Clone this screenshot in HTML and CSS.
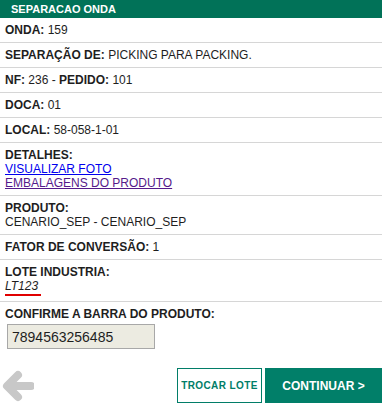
FILE: index.html
```html
<!DOCTYPE html>
<html lang="pt">
<head>
  <meta charset="UTF-8">
  <title>Separacao Onda</title>
  <link rel="stylesheet" href="styles.css">
</head>
<body>
  <div class="header">SEPARACAO ONDA</div>

  <div class="row"><b>ONDA:</b> 159</div>
  <div class="row"><b>SEPARAÇÃO DE:</b> PICKING PARA PACKING.</div>
  <div class="row"><b>NF:</b> 236 - <b>PEDIDO:</b> 101</div>
  <div class="row"><b>DOCA:</b> 01</div>
  <div class="row"><b>LOCAL:</b> 58-058-1-01</div>
  <div class="row">
    <b>DETALHES:</b><br>
    <a href="#" class="link">VISUALIZAR FOTO</a><br>
    <a href="#" class="link visited">EMBALAGENS DO PRODUTO</a>
  </div>
  <div class="row"><b>PRODUTO:</b><br>CENARIO_SEP - CENARIO_SEP</div>
  <div class="row"><b>FATOR DE CONVERSÃO:</b> 1</div>
  <div class="row">
    <b>LOTE INDUSTRIA:</b><br>
    <span class="lote">LT123</span>
  </div>
  <div class="row last">
    <b>CONFIRME A BARRA DO PRODUTO:</b>
    <input type="text" class="barra" value="7894563256485" readonly>
  </div>

  <div class="actions">
    <a href="#" class="back">
      <svg width="32" height="34" viewBox="0 0 32 34">
        <path d="M29 17 H8 M16 6 L5 17 L16 28" fill="none" stroke="#c8c8c8" stroke-width="8" stroke-linecap="round" stroke-linejoin="round"/>
      </svg>
    </a>
    <div class="buttons">
      <button class="btn-outline">TROCAR LOTE</button>
      <button class="btn-primary">CONTINUAR &gt;</button>
    </div>
  </div>
</body>
</html>
```

FILE: styles.css
```css
body {
  font-family: "Liberation Sans", Arial, sans-serif;
  font-size: 12px;
  color: #1e1e1e;
  background-color: #fff;
  margin: 0;
  padding: 0;
}

.header {
  background-color: #017258;
  color: #fff;
  font-weight: bold;
  font-size: 11px;
  line-height: 18px;
  padding: 0 11px;
}

.row {
  line-height: 14px;
  padding: 5px 5px;
  border-bottom: 1px solid #d6d6d6;
}

.row.last {
  border-bottom: none;
  padding-bottom: 0;
}

.link {
  color: #0000ee;
}

.link.visited {
  color: #551a8b;
}

.lote {
  display: inline-block;
  font-style: italic;
  border-bottom: 2px solid #e00000;
  padding-bottom: 1px;
  padding-right: 3px;
}

.barra {
  display: block;
  width: 148px;
  height: 25px;
  margin: 3px 0 0 2px;
  padding: 0 4px;
  box-sizing: border-box;
  border: 1px solid #a8a8a8;
  background-color: #ecebe1;
  font-family: "Liberation Sans", Arial, sans-serif;
  font-size: 14px;
  color: #1e1e1e;
}

.actions {
  display: flex;
  justify-content: space-between;
  align-items: center;
  margin-top: 19px;
}

.back {
  display: flex;
  margin-left: 2px;
}

.buttons {
  display: flex;
  gap: 3px;
}

.btn-outline {
  width: 85px;
  height: 35px;
  padding: 0;
  white-space: nowrap;
  background-color: #fff;
  border: 1px solid #017d68;
  color: #017d68;
  font-family: "Liberation Sans", Arial, sans-serif;
  font-size: 10px;
  font-weight: bold;
  letter-spacing: 0.4px;
  cursor: pointer;
}

.btn-primary {
  width: 117px;
  height: 35px;
  padding: 0;
  white-space: nowrap;
  background-color: #017f69;
  border: none;
  color: #fff;
  font-family: "Liberation Sans", Arial, sans-serif;
  font-size: 12px;
  font-weight: bold;
  cursor: pointer;
}
```
